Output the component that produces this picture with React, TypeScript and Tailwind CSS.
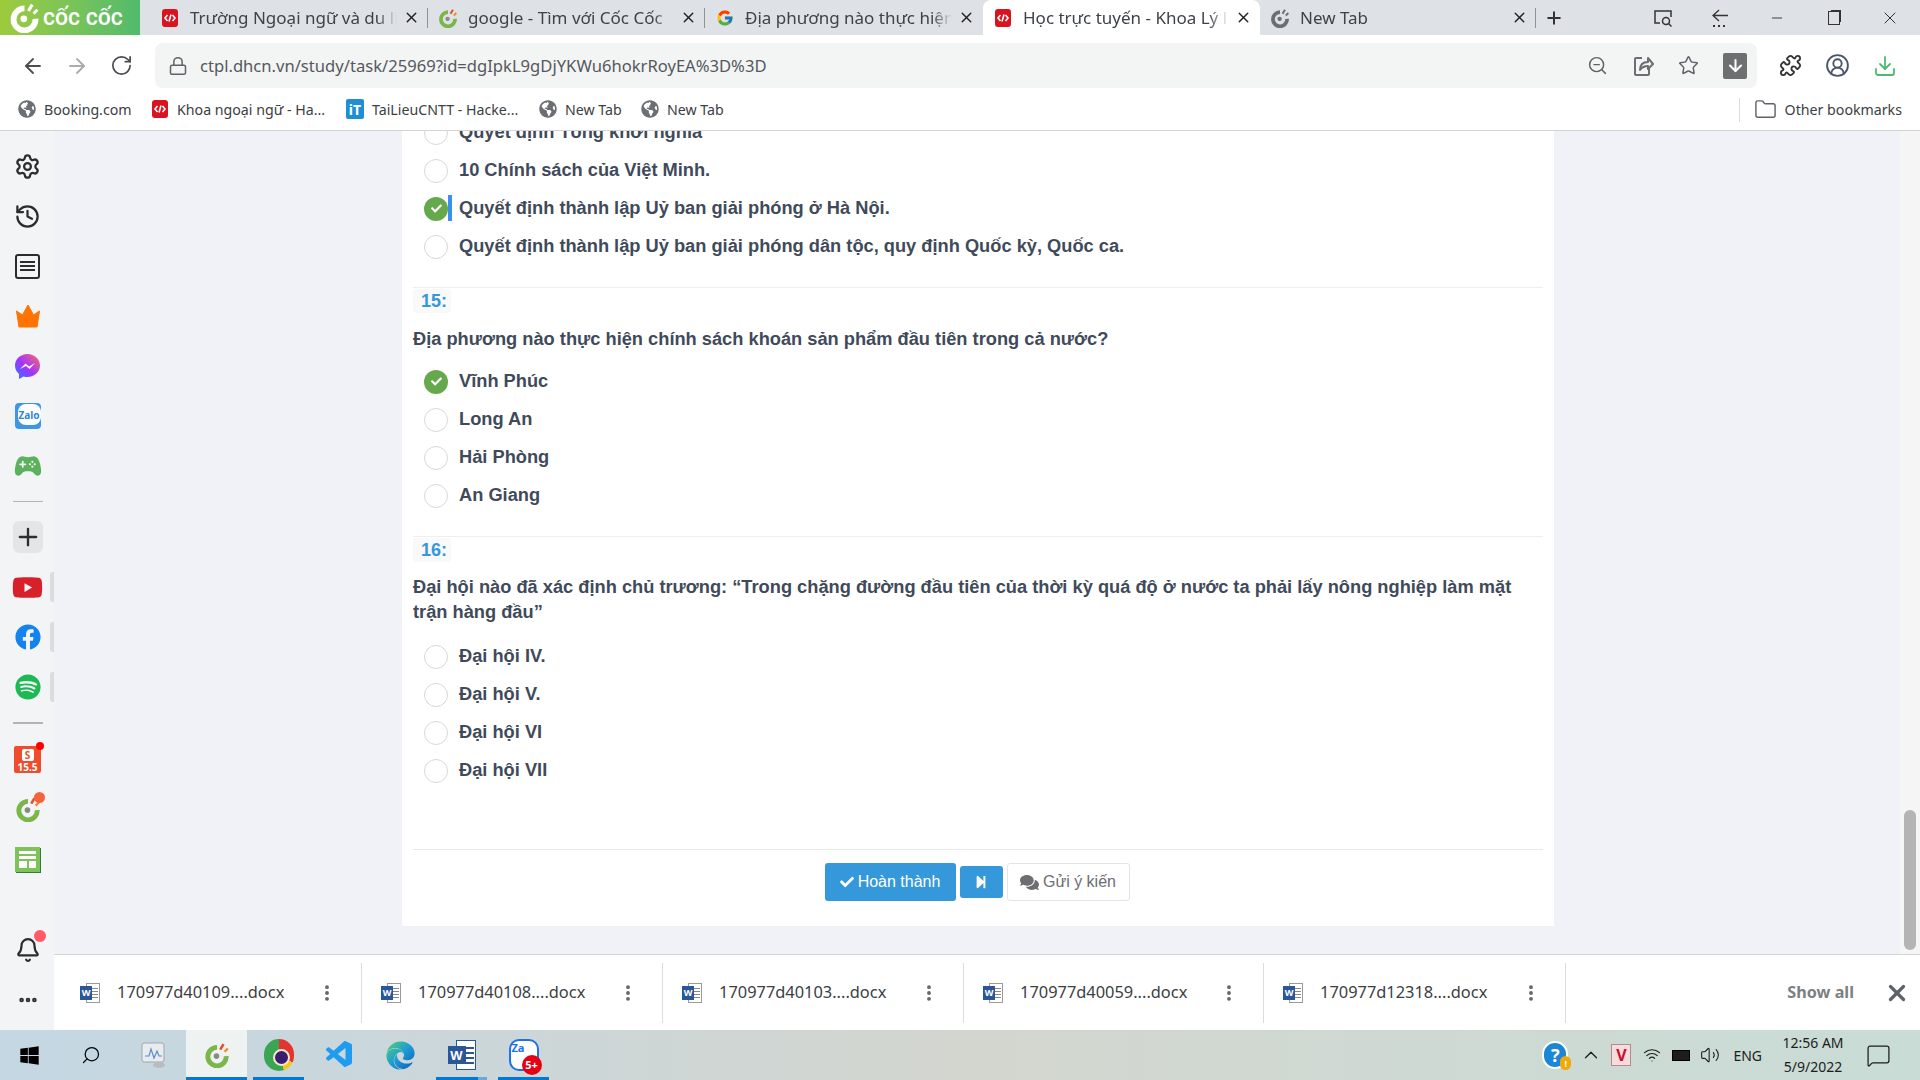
import React from "react";
import { Settings, History, Plus, Bell, MoreHorizontal, ArrowLeft, ArrowRight, RotateCw, Lock, ZoomOut, Star, ArrowDown, Puzzle, CircleUserRound, Download, X, Minus, Folder, MoreVertical, Search, ChevronUp, MessageSquare, Volume2, Wifi } from "lucide-react";
import { FaCheck, FaComments, FaStepForward, FaWindows, FaYoutube, FaFacebook, FaSpotify, FaGlobeAmericas, FaEdge } from "react-icons/fa";
import { FcGoogle } from "react-icons/fc";
import { VscVscode } from "react-icons/vsc";
import { IoGameController } from "react-icons/io5";

const UI = "font-['Noto_Sans','Open_Sans',sans-serif]";

function CocIcon({ size = 20, color = "#7ab648", dark = false }: { size?: number; color?: string; dark?: boolean }) {
  return (
    <svg width={size} height={size} viewBox="0 0 24 24" className="shrink-0">
      <path d="M12 5 A8.5 8.5 0 1 0 20.5 13" fill="none" stroke={color} strokeWidth="4.5" />
      <circle cx="11.5" cy="13" r="2.6" fill={dark ? color : "#888"} />
      <path d="M15 7 L18 2" stroke={dark ? color : "#e2502f"} strokeWidth="2.4" />
      <path d="M19 9 L22 6" stroke={dark ? color : "#f08a24"} strokeWidth="2.2" />
    </svg>
  );
}

function RedCode({ size = 18 }: { size?: number }) {
  return (
    <svg width={size} height={size} viewBox="0 0 18 18" className="shrink-0">
      <rect x="1" y="0" width="16" height="18" rx="3" fill="#d9141f" />
      <path d="M6.5 6 L4 9 L6.5 12 M11.5 6 L14 9 L11.5 12 M10 5.5 L8 12.5" fill="none" stroke="#fff" strokeWidth="1.6" />
    </svg>
  );
}

function Tab({ w, icon, title, active, sep = true, pl = "pl-[10px]" }: { w: string; icon: React.ReactNode; title: string; active?: boolean; sep?: boolean; pl?: string }) {
  return (
    <div className={`${w} h-[35px] shrink-0 flex items-center ${pl} pr-[8px] relative ${active ? "bg-white rounded-t-[8px]" : ""}`}>
      <span className="w-[19px] flex justify-center mr-[11px] shrink-0">{icon}</span>
      <span className="flex-1 overflow-hidden whitespace-nowrap text-[17px] text-[#3f4349] [mask-image:linear-gradient(to_right,black_90%,transparent)]">{title}</span>
      <X size={17} strokeWidth={2} className="text-[#222] shrink-0 ml-[6px]" />
      {sep && <span className="absolute right-0 top-[8px] h-[20px] w-px bg-[#8f9296]" />}
    </div>
  );
}

function Mark({ name }: { name: string }) {
  return <span className="text-[14.2px] text-[#3c4043] whitespace-nowrap">{name}</span>;
}

function Bookmark({ icon, name, w }: { icon: React.ReactNode; name: string; w: string }) {
  return (
    <div className={`${w} shrink-0 flex items-center gap-[8px]`}>
      {icon}
      <Mark name={name} />
    </div>
  );
}

const GlobeMark = () => <FaGlobeAmericas size={18} className="text-[#6b6e72] shrink-0" />;

function SideRow({ children, tab }: { children: React.ReactNode; tab?: boolean }) {
  return (
    <div className="h-[50px] w-full flex items-center justify-center relative">
      {children}
      {tab && <span className="absolute right-0 top-[10px] h-[30px] w-[4px] bg-[#dcdcdc] rounded-l-[3px]" />}
    </div>
  );
}

function Option({ text, checked, mark }: { text: string; checked?: boolean; mark?: boolean }) {
  return (
    <div className="h-[38px] flex items-center pl-[11px] relative">
      {checked ? (
        <span className="w-[24px] h-[24px] rounded-full bg-[#66a84c] flex items-center justify-center shrink-0 mt-[1px]">
          <FaCheck size={11} className="text-white" />
        </span>
      ) : (
        <span className="w-[24px] h-[24px] rounded-full border border-[#d8d8d4] bg-white shrink-0 mt-[1px]" />
      )}
      {mark && <span className="w-[4px] h-[26px] bg-[#3b8ff0] shrink-0" />}
      <span className={`${mark ? "ml-[7px]" : "ml-[11px]"} -mt-[1px] text-[18.25px] font-bold text-[#3f4a5a] whitespace-nowrap`}>{text}</span>
    </div>
  );
}

function QNum({ n, mt }: { n: string; mt: string }) {
  return (
    <div className={`${mt} w-[38px] h-[24px] bg-[#f9f9fa] rounded-[3px] flex items-center justify-end pr-[4px] text-[18px] font-bold text-[#3498db]`}>{n}</div>
  );
}

function WordIcon({ size = 20 }: { size?: number }) {
  return (
    <span className="relative shrink-0 flex justify-end" style={{ width: size, height: size }}>
      <span className="w-[14px] h-full bg-white border border-[#9a9a9a] flex flex-col justify-center gap-[2px] items-end pr-[1px]">
        <span className="w-[6px] h-px bg-[#888]" /><span className="w-[6px] h-px bg-[#888]" /><span className="w-[6px] h-px bg-[#888]" /><span className="w-[6px] h-px bg-[#888]" />
      </span>
      <span className="absolute left-0 top-[3px] w-[12px] h-[14px] bg-[#2b579a] text-white text-[9px] font-bold flex items-center justify-center leading-none">W</span>
    </span>
  );
}

function DownloadItem({ name, w = "w-[301px]" }: { name: string; w?: string }) {
  return (
    <div className={`${w} shrink-0 h-[60px] flex items-center pl-[19px] pr-[24px] border-r border-[#dcdcdc]`}>
      <WordIcon />
      <span className="ml-[17px] text-[16.4px] text-[#3c4043] whitespace-nowrap flex-1">{name}</span>
      <MoreVertical size={20} strokeWidth={2.6} className="text-[#5f6368]" />
    </div>
  );
}

function TaskApp({ children, w, active, bar, light }: { children: React.ReactNode; w: string; active?: boolean; bar?: boolean; light?: boolean }) {
  return (
    <div className={`${w} h-[50px] shrink-0 flex items-center justify-center relative ${active ? "bg-[#eef2f0]" : ""}`}>
      {children}
      {bar && <span className="absolute bottom-0 left-0 right-0 h-[3px] bg-[#0078d4]" />}
      {light && <span className="absolute bottom-0 right-0 w-[9px] h-[3px] bg-[#6aa9e0]" />}
    </div>
  );
}

export default function App() {
  return (
    <div className={`w-[1920px] h-[1080px] overflow-hidden flex flex-col bg-white ${UI}`}>
      <svg width="0" height="0" className="absolute">
        <defs>
          <linearGradient id="edgeG" x1="0" y1="0" x2="1" y2="1">
            <stop offset="0" stopColor="#54d46a" />
            <stop offset="0.5" stopColor="#1f9ad6" />
            <stop offset="1" stopColor="#0d5fb0" />
          </linearGradient>
          <linearGradient id="msgG" x1="0" y1="1" x2="1" y2="0">
            <stop offset="0" stopColor="#2a7bff" />
            <stop offset="0.45" stopColor="#a033ff" />
            <stop offset="1" stopColor="#ff6a6a" />
          </linearGradient>
        </defs>
      </svg>

      {/* Tab strip */}
      <div className="h-[35px] shrink-0 flex items-center bg-[#dee1e6]">
        <div className="w-[140px] h-full shrink-0 bg-gradient-to-r from-[#9ecb3c] to-[#4fbb6c] flex items-center pl-[9px] gap-[3px] text-white">
          <CocIcon size={31} color="#ffffff" dark />
          <span className="text-[23px] font-medium font-['Roboto',sans-serif] leading-none whitespace-nowrap">cốc cốc</span>
        </div>
        <Tab w="w-[288px]" pl="pl-[20px]" icon={<RedCode />} title="Trường Ngoại ngữ và du lị" />
        <Tab w="w-[277px]" icon={<CocIcon size={20} />} title="google - Tìm với Cốc Cốc" />
        <Tab w="w-[278px]" icon={<FcGoogle size={18} />} title="Địa phương nào thực hiện" sep={false} />
        <Tab w="w-[277px]" icon={<RedCode />} title="Học trực tuyến - Khoa Lý l" active sep={false} />
        <Tab w="w-[276px]" icon={<CocIcon size={20} color="#6b6e72" dark />} title="New Tab" />
        <Plus size={20} strokeWidth={2.4} className="ml-[8px] text-[#333] shrink-0" />
        <div className="ml-auto flex items-center text-[#333] h-full">
          <span className="w-[57px] flex justify-center">
            <svg width="22" height="22" viewBox="0 0 22 22" fill="none" stroke="#333" strokeWidth="1.5"><path d="M8 16H3V4h16v6" /><circle cx="14" cy="14" r="3.5" /><path d="M16.5 16.5L19.5 19.5" /></svg>
          </span>
          <span className="w-[57px] flex justify-center">
            <svg width="22" height="22" viewBox="0 0 22 22" fill="none" stroke="#333" strokeWidth="1.3"><path d="M10 3L4 8.5L10 14M4 8.5H19" /><path d="M4 19h2M9 19h2M14 19h2" strokeWidth="2" /></svg>
          </span>
          <span className="w-[57px] flex justify-center"><Minus size={16} strokeWidth={1.4} /></span>
          <span className="w-[57px] flex justify-center"><span className="w-[12px] h-[14px] border border-[#333] shadow-[2px_-2px_0_-1px_#333]" /></span>
          <span className="w-[58px] flex justify-center pr-[2px]"><X size={20} strokeWidth={1.2} /></span>
        </div>
      </div>

      {/* Toolbar */}
      <div className="h-[53px] shrink-0 bg-white flex items-start pt-[8px]">
        <div className="w-[155px] h-[45px] shrink-0 flex items-center pl-[21px] text-[#4a4d51]">
          <ArrowLeft size={24} strokeWidth={1.8} className="mr-[20px]" />
          <ArrowRight size={24} strokeWidth={1.8} className="mr-[21px] text-[#a8abaf]" />
          <RotateCw size={23} strokeWidth={1.8} />
        </div>
        <div className="w-[1602px] h-[45px] shrink-0 bg-[#f3f4f4] rounded-[8px] flex items-center pl-[13px] pr-[10px]">
          <Lock size={20} strokeWidth={1.8} className="text-[#5f6368]" />
          <span className="ml-[12px] mt-[1px] text-[16.6px] text-[#55595e] whitespace-nowrap">ctpl.dhcn.vn/study/task/25969?id=dgIpkL9gDjYKWu6hokrRoyEA%3D%3D</span>
          <div className="ml-auto flex items-center text-[#5f6368] gap-[24px]">
            <ZoomOut size={21} strokeWidth={1.7} />
            <svg width="22" height="24" viewBox="0 0 22 24" fill="none" stroke="#6b6e72" strokeWidth="2"><path d="M10 4H4a1 1 0 0 0-1 1v15a1 1 0 0 0 1 1h12a1 1 0 0 0 1-1v-6" /><path d="M8 16c0-5 3-8 8-8V4l5 6-5 5v-3c-4 0-6 1-8 4z" strokeLinejoin="round" /></svg>
            <Star size={21} strokeWidth={1.7} />
            <span className="w-[24px] h-[26px] bg-[#6d6f71] rounded-[2px] flex items-center justify-center">
              <ArrowDown size={19} strokeWidth={2.6} className="text-white" />
            </span>
          </div>
        </div>
        <div className="flex-1 h-[45px] flex items-center pl-[10px] text-[#333]">
          <span className="w-[47px] flex justify-center"><Puzzle size={23} strokeWidth={1.9} /></span>
          <span className="w-[47px] flex justify-center"><CircleUserRound size={25} strokeWidth={1.8} className="text-[#4a5568]" /></span>
          <span className="w-[47px] flex justify-center"><Download size={24} strokeWidth={1.8} className="text-[#4fba6f]" /></span>
        </div>
      </div>

      {/* Bookmarks */}
      <div className="h-[43px] shrink-0 flex items-center bg-white border-b border-[#d4d4d4] pl-[18px] pt-[1px]">
        <Bookmark w="w-[133px]" icon={<GlobeMark />} name="Booking.com" />
        <Bookmark w="w-[195px]" icon={<RedCode />} name="Khoa ngoại ngữ - Ha..." />
        <Bookmark w="w-[193px]" icon={<span className="w-[18px] h-[20px] bg-[#1f8ed6] rounded-[2px] text-white text-[14px] font-bold flex items-center justify-center shrink-0">iT</span>} name="TaiLieuCNTT - Hacke..." />
        <Bookmark w="w-[102px]" icon={<GlobeMark />} name="New Tab" />
        <Bookmark w="w-[100px]" icon={<GlobeMark />} name="New Tab" />
        <div className="ml-auto flex items-center pr-[18px] h-[22px]">
          <span className="h-[24px] w-px bg-[#dadce0] mr-[14px]" />
          <Folder size={23} strokeWidth={1.5} className="text-[#5f6368] mr-[8px]" />
          <Mark name="Other bookmarks" />
        </div>
      </div>

      {/* Body */}
      <div className="flex-1 min-h-0 flex">
        {/* Sidebar */}
        <div className="w-[54px] shrink-0 bg-[#f3f4f6] flex flex-col pt-[10px] pb-[5px] pl-[1px] text-[#2c2c2c]">
          <SideRow><Settings size={27} strokeWidth={2} /></SideRow>
          <SideRow><History size={27} strokeWidth={2} /></SideRow>
          <SideRow>
            <span className="w-[25px] h-[25px] border-[2px] border-[#2c2c2c] rounded-[3px] flex flex-col justify-center gap-[2px] pl-[3px]">
              <span className="w-[15px] h-[2px] bg-[#2c2c2c]" /><span className="w-[15px] h-[2px] bg-[#2c2c2c]" /><span className="w-[15px] h-[2px] bg-[#2c2c2c]" />
            </span>
          </SideRow>
          <SideRow>
            <svg width="26" height="26" viewBox="0 0 26 26"><path d="M1.5 8 L7.5 12 L13 2 L18.5 12 L24.5 8 L22 24 H4 Z" fill="#ff7300" stroke="#ff7300" strokeLinejoin="round" strokeWidth="1" /></svg>
          </SideRow>
          <SideRow>
            <svg width="27" height="27" viewBox="0 0 27 27">
              <path d="M13.5 1C6.6 1 1 6.1 1 12.6c0 3.4 1.5 6.4 4 8.5V26l4.5-2.6c1.3.4 2.6.6 4 .6 6.9 0 12.5-5 12.5-11.4S20.400 1 13.500 1z" fill="url(#msgG)" />
              <path d="M6 16 L11.500 10.500 L15 13.500 L21 10 L15.500 16 L12 13 Z" fill="#fff" />
            </svg>
          </SideRow>
          <SideRow>
            <span className="relative w-[26px] h-[26px] rounded-[4px] bg-[#3f96e3] flex items-center justify-center overflow-hidden">
              <span className="absolute left-[3px] top-[1px] right-0 bottom-[4px] rounded-[8px] bg-white flex items-center justify-center text-[#2f86d8] text-[10px] font-bold leading-none">Zalo</span>
            </span>
          </SideRow>
          <SideRow><IoGameController size={28} className="text-[#5cb25c]" /></SideRow>
          <div className="h-[21px] flex items-center justify-center shrink-0"><span className="w-[30px] h-px bg-[#b4b4b4]" /></div>
          <SideRow>
            <span className="w-[30px] h-[32px] bg-[#e4e5e7] rounded-[6px] flex items-center justify-center"><Plus size={28} strokeWidth={2} /></span>
          </SideRow>
          <SideRow tab><FaYoutube size={31} className="text-[#d7202a]" /></SideRow>
          <SideRow tab><FaFacebook size={26} className="text-[#1583ee]" /></SideRow>
          <SideRow tab><FaSpotify size={26} className="text-[#1cb954]" /></SideRow>
          <div className="h-[22px] flex items-center justify-center shrink-0"><span className="w-[30px] h-[2px] bg-[#b4b4b4]" /></div>
          <SideRow>
            <span className="relative w-[27px] h-[27px] bg-[#ee4d2d] rounded-[2px] flex flex-col items-center justify-end text-white text-[10px] font-bold leading-[12px]">
              <span className="w-[12px] h-[12px] bg-white rounded-[2px] text-[#ee4d2d] text-[10px] leading-[12px] flex justify-center">S</span>15.5
              <span className="absolute -right-[3px] -top-[4px] w-[8px] h-[8px] rounded-full bg-[#f00]" />
            </span>
          </SideRow>
          <SideRow>
            <span className="relative"><CocIcon size={26} color="#7ab648" /><span className="absolute -right-[4px] -top-[4px] w-[11px] h-[11px] rounded-full bg-[#f4633a]" /></span>
          </SideRow>
          <SideRow>
            <span className="w-[25px] h-[25px] bg-[#7dc35a] border-[2px] border-[#7dc35a] shadow-[1px_1px_0_#2f7d3b] flex flex-col gap-[2px] p-[2px]">
              <span className="h-[3px] bg-white" /><span className="h-[3px] bg-white" />
              <span className="flex-1 flex gap-[2px]"><span className="flex-1 bg-white" /><span className="flex-1 bg-white" /></span>
            </span>
          </SideRow>
          <div className="mt-auto flex flex-col">
            <SideRow>
              <span className="relative"><Bell size={26} strokeWidth={2} /><span className="absolute -right-[5px] -top-[7px] w-[12px] h-[12px] rounded-full bg-[#ff5a66]" /></span>
            </SideRow>
            <SideRow><MoreHorizontal size={22} strokeWidth={3} /></SideRow>
          </div>
        </div>

        <div className="flex-1 min-w-0 flex flex-col">
          {/* Page */}
          <div className="flex-1 min-h-0 bg-[#f1f2f7] overflow-hidden flex flex-col justify-end pb-[28px] relative">
            <div className="ml-[348px] w-[1152px] bg-white px-[11px] pt-[30px] pb-[25px] font-['Liberation_Sans',Arial,sans-serif]">
              <Option text="Quyết định Tổng khởi nghĩa" />
              <Option text="10 Chính sách của Việt Minh." />
              <Option text="Quyết định thành lập Uỷ ban giải phóng ở Hà Nội." checked mark />
              <Option text="Quyết định thành lập Uỷ ban giải phóng dân tộc, quy định Quốc kỳ, Quốc ca." />
              <div className="h-px bg-[#eeeeee] mt-[22px]" />
              <QNum n="15:" mt="mt-[1px]" />
              <div className="mt-[14px] text-[18.25px] leading-[24px] font-bold text-[#3f4a5a]">Địa phương nào thực hiện chính sách khoán sản phẩm đầu tiên trong cả nước?</div>
              <div className="mt-[11px]">
                <Option text="Vĩnh Phúc" checked />
                <Option text="Long An" />
                <Option text="Hải Phòng" />
                <Option text="An Giang" />
              </div>
              <div className="h-px bg-[#eeeeee] mt-[22px]" />
              <QNum n="16:" mt="mt-[1px]" />
              <div className="mt-[12px] text-[18.25px] leading-[25px] font-bold text-[#3f4a5a]">Đại hội nào đã xác định chủ trương: “Trong chặng đường đầu tiên của thời kỳ quá độ ở nước ta phải lấy nông nghiệp làm mặt trận hàng đầu”</div>
              <div className="mt-[13px]">
                <Option text="Đại hội IV." />
                <Option text="Đại hội V." />
                <Option text="Đại hội VI" />
                <Option text="Đại hội VII" />
              </div>
              <div className="h-px bg-[#e9e9e9] mt-[60px]" />
              <div className="mt-[13px] pr-[2px] flex items-center justify-center gap-[4px] text-[16px] h-[38px]">
                <span className="w-[131px] h-[38px] bg-[#3498db] rounded-[3px] text-white flex items-center justify-center gap-[4px]"><FaCheck size={14} />Hoàn thành</span>
                <span className="w-[43px] h-[32px] bg-[#3498db] rounded-[3px] text-white flex items-center justify-center"><FaStepForward size={14} /></span>
                <span className="w-[123px] h-[38px] border border-[#e4e4e4] bg-white rounded-[3px] text-[#6d6d72] flex items-center justify-center gap-[4px]"><FaComments size={19} />Gửi ý kiến</span>
              </div>
            </div>
            <span className="absolute right-0 top-0 bottom-0 w-[20px] bg-[#f5f5f5]" />
            <span className="absolute right-[4px] bottom-[4px] w-[12px] h-[140px] bg-[#b4b4b4] rounded-full" />
          </div>

          {/* Downloads */}
          <div className="h-[76px] shrink-0 bg-white border-t border-[#d4d4d4] flex items-center pl-[7px]">
            <DownloadItem name="170977d40109....docx" />
            <DownloadItem name="170977d40108....docx" />
            <DownloadItem name="170977d40103....docx" />
            <DownloadItem name="170977d40059....docx" w="w-[300px]" />
            <DownloadItem name="170977d12318....docx" w="w-[302px]" />
            <span className="ml-auto text-[16.2px] font-bold text-[#7d7f82]">Show all</span>
            <X size={26} strokeWidth={3} className="ml-[30px] mr-[10px] text-[#5f6368]" />
          </div>
        </div>
      </div>

      {/* Taskbar */}
      <div className="h-[50px] shrink-0 flex items-center bg-gradient-to-r from-[#c4d7e3] via-[#d3d6cf] to-[#c9dcd6]">
        <div className="w-[60px] flex justify-center shrink-0 pr-[2px]"><FaWindows size={21} className="text-black" /></div>
        <div className="w-[61px] flex justify-center shrink-0"><Search size={20} strokeWidth={1.5} className="text-black -scale-x-100" /></div>
        <div className="w-[65px] flex justify-center shrink-0">
          <svg width="30" height="30" viewBox="0 0 30 30">
            <rect x="3" y="3" width="22" height="19" rx="2" fill="#e8ecef" stroke="#a0a5aa" />
            <path d="M6 16 L10 16 L12 9 L15 18 L18 11 L20 16 L23 16" fill="none" stroke="#5a8ec8" strokeWidth="1.2" />
            <ellipse cx="20" cy="25" rx="6" ry="3" fill="#b8bcc0" />
          </svg>
        </div>
        <TaskApp w="w-[61px]" active bar><CocIcon size={26} color="#7ab648" /></TaskApp>
        <div className="w-[6px]" />
        <TaskApp w="w-[51px]" bar>
          <span className="w-[30px] h-[32px] rounded-full bg-[conic-gradient(#e3342f_0_33%,#f5c518_33%_45%,#3aa655_45%_100%)] flex items-center justify-center">
            <span className="w-[17px] h-[17px] rounded-full bg-[#3b1d6e] border-[2px] border-[#f5e9c8] ml-[5px] mt-[4px]" />
          </span>
        </TaskApp>
        <div className="w-[10px]" />
        <TaskApp w="w-[51px]"><VscVscode size={32} className="text-[#1f9cf0]" /></TaskApp>
        <div className="w-[10px]" />
        <TaskApp w="w-[51px]"><FaEdge size={29} className="fill-[url(#edgeG)]" /></TaskApp>
        <div className="w-[10px]" />
        <TaskApp w="w-[51px]" bar light>
          <span className="relative w-[28px] h-[30px] flex justify-end">
            <span className="w-[20px] h-full bg-white border border-[#2b579a] flex flex-col justify-center gap-[3px] items-end pr-[1px]">
              <span className="w-[8px] h-[2px] bg-[#2b579a]" /><span className="w-[8px] h-[2px] bg-[#2b579a]" /><span className="w-[8px] h-[2px] bg-[#2b579a]" /><span className="w-[8px] h-[2px] bg-[#2b579a]" />
            </span>
            <span className="absolute left-0 top-[6px] w-[18px] h-[18px] bg-[#2b579a] text-white text-[13px] font-bold flex items-center justify-center leading-none font-['Liberation_Sans',sans-serif]">W</span>
          </span>
        </TaskApp>
        <div className="w-[11px]" />
        <TaskApp w="w-[51px]" bar>
          <span className="relative w-[30px] h-[32px] rounded-[10px] bg-white border-[2px] border-[#1a73e8] flex items-start justify-start text-[#1a73e8] text-[11px] font-bold pl-[1px] leading-[14px]">
            Za
            <span className="absolute -right-[5px] -bottom-[6px] w-[20px] h-[20px] rounded-full bg-[#e60012] text-white text-[11px] flex items-center justify-center">5+</span>
          </span>
        </TaskApp>
        <div className="ml-auto flex items-center h-full text-[#1d1d1d]">
          <span className="relative w-[26px] h-[28px] rounded-full bg-[#1b86d6] border-[2px] border-white text-white font-bold text-[18px] flex items-center justify-center leading-none">?
            <span className="absolute -right-[5px] -bottom-[3px] w-[11px] h-[14px] rounded-full bg-[#f0a90a] text-[9px] flex items-center justify-center">!</span>
          </span>
          <ChevronUp size={22} strokeWidth={1.4} className="ml-[12px]" />
          <span className="ml-[9px] w-[20px] h-[22px] bg-[#f6dcdc] border border-[#b98a8a] text-[#c8102e] text-[16px] font-bold flex items-center justify-center leading-none">V</span>
          <Wifi size={18} strokeWidth={1.6} className="ml-[12px]" />
          <span className="ml-[11px] w-[18px] h-[11px] border border-black bg-[#1d1d1d]" />
          <Volume2 size={20} strokeWidth={1.3} className="ml-[10px]" />
          <span className="ml-[13px] text-[14px] text-[#1d1d1d]">ENG</span>
          <div className="ml-[8px] w-[86px] flex flex-col items-center text-[14px] leading-[24px]">
            <span>12:56 AM</span>
            <span>5/9/2022</span>
          </div>
          <MessageSquare size={25} strokeWidth={1.2} className="ml-[10px] mr-[29px]" />
        </div>
      </div>
    </div>
  );
}
